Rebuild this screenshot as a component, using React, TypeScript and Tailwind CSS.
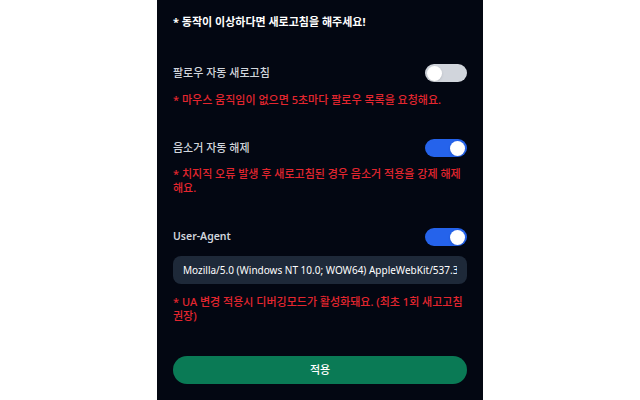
import { useState } from "react";

const font = "font-['Noto_Sans','Noto_Sans_CJK_KR',sans-serif]";

type ToggleProps = {
  on: boolean;
  onChange: () => void;
};

const Toggle = ({ on, onChange }: ToggleProps) => (
  <button
    type="button"
    onClick={onChange}
    className={`relative flex h-[18px] w-[42px] shrink-0 items-center rounded-full px-[2px] transition-colors ${
      on ? "justify-end bg-[#2563eb]" : "justify-start bg-gray-300"
    }`}
  >
    <span className="h-[15px] w-[15px] rounded-full bg-white shadow-sm" />
  </button>
);

export default function App() {
  const [autoRefresh, setAutoRefresh] = useState(false);
  const [autoUnmute, setAutoUnmute] = useState(true);
  const [useUa, setUseUa] = useState(true);
  const [ua, setUa] = useState(
    "Mozilla/5.0 (Windows NT 10.0; WOW64) AppleWebKit/537.36 (KHTML, like Gecko) Chrome/120.0.0.0 Safari/537.36"
  );

  return (
    <div className={`min-h-screen bg-white ${font}`}>
      <div className="mx-auto flex h-[400px] w-[326px] flex-col overflow-hidden bg-[#030712] px-4 pt-[14px]">
        {/* Notice */}
        <p className="text-[11px] font-bold leading-4 text-white">
          * 동작이 이상하다면 새로고침을 해주세요!
        </p>

        {/* Follow auto refresh */}
        <div className="mt-[34px] flex h-[18px] items-center justify-between">
          <span className="text-[11px] font-medium text-gray-300">팔로우 자동 새로고침</span>
          <Toggle on={autoRefresh} onChange={() => setAutoRefresh(!autoRefresh)} />
        </div>
        <p className="mt-[11px] text-[11px] font-medium leading-[14px] text-[#e3262f]">
          * 마우스 움직임이 없으면 5초마다 팔로우 목록을 요청해요.
        </p>

        {/* Auto unmute */}
        <div className="mt-8 flex h-[18px] items-center justify-between">
          <span className="text-[11px] font-medium text-gray-300">음소거 자동 해제</span>
          <Toggle on={autoUnmute} onChange={() => setAutoUnmute(!autoUnmute)} />
        </div>
        <p className="mt-[10px] text-[11px] font-medium leading-[14px] text-[#e3262f]">
          * 치지직 오류 발생 후 새로고침된 경우 음소거 적용을 강제 해제해요.
        </p>

        {/* User-Agent */}
        <div className="mt-[33px] flex h-[18px] items-center justify-between">
          <span className="text-[10.5px] font-semibold text-gray-300">User-Agent</span>
          <Toggle on={useUa} onChange={() => setUseUa(!useUa)} />
        </div>
        <input
          value={ua}
          onChange={(e) => setUa(e.target.value)}
          className="mt-[10px] h-7 w-full rounded-lg bg-gray-800 px-[10px] text-[10px] text-white outline-none"
        />
        <p className="mt-[11px] text-[11px] font-medium leading-[14px] text-[#e3262f]">
          * UA 변경 적용시 디버깅모드가 활성화돼요. (최초 1회 새고고침 권장)
        </p>

        <button
          type="button"
          className="mt-[33px] h-7 w-full rounded-full bg-[#0a7a55] text-[11px] font-medium text-white"
        >
          적용
        </button>
      </div>
    </div>
  );
}
